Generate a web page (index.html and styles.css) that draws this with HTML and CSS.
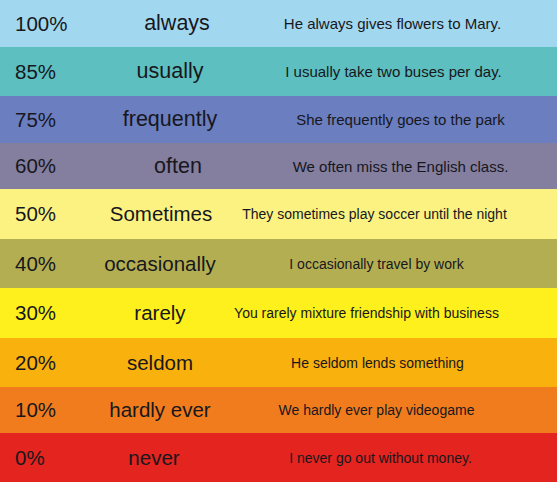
FILE: index.html
```html
<!DOCTYPE html>
<html lang="en">
<head>
<meta charset="utf-8">
<title>Adverbs of frequency</title>
<link rel="stylesheet" href="styles.css">
</head>
<body>
<div class="chart">
  <div class="row r1"><span class="pct">100%</span><span class="word">always</span><span class="sent">He always gives flowers to Mary.</span></div>
  <div class="row r2"><span class="pct">85%</span><span class="word">usually</span><span class="sent">I usually take two buses per day.</span></div>
  <div class="row r3"><span class="pct">75%</span><span class="word">frequently</span><span class="sent">She frequently goes to the park</span></div>
  <div class="row r4"><span class="pct">60%</span><span class="word">often</span><span class="sent">We often miss the English class.</span></div>
  <div class="row r5 small"><span class="pct">50%</span><span class="word">Sometimes</span><span class="sent">They sometimes play soccer until the night</span></div>
  <div class="row r6 small"><span class="pct">40%</span><span class="word">occasionally</span><span class="sent">I occasionally travel by work</span></div>
  <div class="row r7 small"><span class="pct">30%</span><span class="word">rarely</span><span class="sent">You rarely mixture friendship with business</span></div>
  <div class="row r8 small"><span class="pct">20%</span><span class="word">seldom</span><span class="sent">He seldom lends something</span></div>
  <div class="row r9 small"><span class="pct">10%</span><span class="word">hardly ever</span><span class="sent">We hardly ever play videogame</span></div>
  <div class="row r10 small"><span class="pct">0%</span><span class="word">never</span><span class="sent">I never go out without money.</span></div>
</div>
</body>
</html>
```
FILE: styles.css
```css
* { box-sizing: border-box; }
html, body {
  margin: 0;
  padding: 0;
  width: 557px;
  height: 482px;
  overflow: hidden;
}
body {
  font-family: "Liberation Sans", Arial, sans-serif;
  color: #17171d;
}
.chart {
  display: grid;
  grid-template-rows: 47px 49px 47px 46px 50px 49px 50px 49px 46px 49px;
  width: 557px;
  height: 482px;
}
.row {
  --wx: 0px;
  --sx: 0px;
  display: grid;
  grid-template-columns: 100px 140px 1fr;
  align-items: center;
  white-space: nowrap;
}
.pct {
  font-size: 20.5px;
  padding-left: 15px;
}
.word {
  font-size: 21.5px;
  text-align: center;
  margin-left: calc(var(--wx) * 2);
}
.sent {
  font-size: 15px;
  text-align: center;
  margin-left: calc(var(--sx) * 2);
}
.small .word { font-size: 20.5px; }
.small .sent { font-size: 14px; }

.r1 { background: #a2d8ef; --wx: 7px; --sx: -6px; }
.r2 { background: #5dbfbf; --wx: 0px; --sx: -5px; }
.r3 { background: #6a7ec0; --wx: 0px; --sx: 2px; }
.r4 { background: #847e9f; --wx: 8px; --sx: 2px; }
.r5 { background: #fbf281; --wx: -9px; --sx: -24px; }
.r6 { background: #b4ae53; --wx: -10px; --sx: -22px; }
.r7 { background: #fdf01c; --wx: -10px; --sx: -32px; }
.r8 { background: #f9b10d; --wx: -10px; --sx: -21px; }
.r9 { background: #f07c1d; --wx: -10px; --sx: -22px; }
.r10 { background: #e4241f; --wx: -16px; --sx: -18px; }
```
